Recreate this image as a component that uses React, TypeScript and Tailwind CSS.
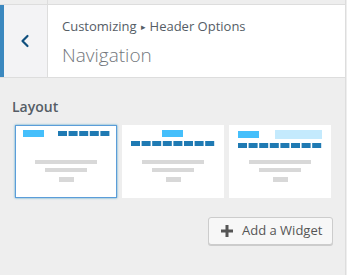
import { ChevronLeft } from "lucide-react";

const DARK = "#1f7ab3";
const LIGHT = "#45bffb";
const PALE = "#c4eafd";
const GRAY = "#d8d8d8";

function Blocks({ x, y, n }: { x: number; y: number; n: number }) {
  return (
    <>
      {Array.from({ length: n }).map((_, i) => (
        <rect key={i} x={x + i * 10.6} y={y} width={9} height={5} fill={DARK} />
      ))}
    </>
  );
}

function Lines() {
  return (
    <>
      <rect x={20} y={35} width={62} height={4} fill={GRAY} />
      <rect x={30} y={43} width={42} height={4} fill={GRAY} />
      <rect x={44} y={52} width={15} height={5} fill={GRAY} />
    </>
  );
}

function Thumb({ kind }: { kind: number }) {
  return (
    <svg width="102" height="73" viewBox="0 0 102 73">
      {kind === 0 && (
        <>
          <rect x={8} y={5} width={21} height={7} fill={LIGHT} />
          <Blocks x={43} y={6} n={5} />
        </>
      )}
      {kind === 1 && (
        <>
          <rect x={40} y={5} width={21} height={7} fill={LIGHT} />
          <Blocks x={9} y={16} n={8} />
        </>
      )}
      {kind === 2 && (
        <>
          <rect x={9} y={6} width={21} height={7} fill={LIGHT} />
          <rect x={46} y={5} width={47} height={9} fill={PALE} />
          <Blocks x={9} y={18} n={8} />
        </>
      )}
      <Lines />
    </svg>
  );
}

export default function App() {
  return (
    <div
      className="w-[347px] h-[275px] bg-[#eeeeee] overflow-hidden"
      style={{ fontFamily: '"Open Sans", "Noto Sans", sans-serif' }}
    >
      <div className="w-[346px] h-full border-r border-[#dddddd]">
        {/* top gap */}
        <div className="h-[4px] flex">
          <div className="w-[48px] border-r border-[#dddddd]" />
        </div>

        {/* header */}
        <div className="flex h-[74px] bg-white border-y border-[#dddddd]">
          <div className="w-[4px] bg-[#3b88bf]" />
          <div className="w-[44px] bg-[#f3f3f5] border-r border-[#dddddd] flex items-center justify-center">
            <ChevronLeft size={20} strokeWidth={2.6} className="text-[#0f4f7e] -ml-[1px]" />
          </div>
          <div className="pl-[14px] pt-[12px] text-[#555d66]">
            <div className="text-[13px] leading-[18px]">
              Customizing<span className="text-[9px] relative -top-[1px] mx-[4px]">▸</span>Header Options
            </div>
            <div className="text-[19px] leading-[28px] mt-[4px] text-[#72777c] font-light">Navigation</div>
          </div>
        </div>

        {/* layout section */}
        <div className="px-3 pt-[20px]">
          <div className="text-[14px] leading-[18px] font-semibold text-[#555d66]">Layout</div>
          <div className="flex gap-[5px] pl-[3px] mt-[9px]">
            <div className="w-[102px] h-[73px] bg-white border border-[#5b9dd9] shadow-[0_0_2px_rgba(30,140,190,0.8)] overflow-hidden">
              <div className="-m-[1px]">
                <Thumb kind={0} />
              </div>
            </div>
            <div className="w-[102px] h-[73px] bg-white">
              <Thumb kind={1} />
            </div>
            <div className="w-[102px] h-[73px] bg-white">
              <Thumb kind={2} />
            </div>
          </div>

          <div className="flex justify-end mt-[19px]">
            <button className="h-[28px] w-[125px] flex items-center gap-[9px] pl-[12px] bg-[#f7f7f7] border border-[#cccccc] rounded-[3px] shadow-[0_1px_0_#cccccc] text-[13px] text-[#555555]">
              <svg width="12" height="12" viewBox="0 0 12 12">
                <rect x="4.5" y="0" width="3" height="12" fill="#555555" />
                <rect x="0" y="4.5" width="12" height="3" fill="#555555" />
              </svg>
              Add a Widget
            </button>
          </div>
        </div>
      </div>
    </div>
  );
}
